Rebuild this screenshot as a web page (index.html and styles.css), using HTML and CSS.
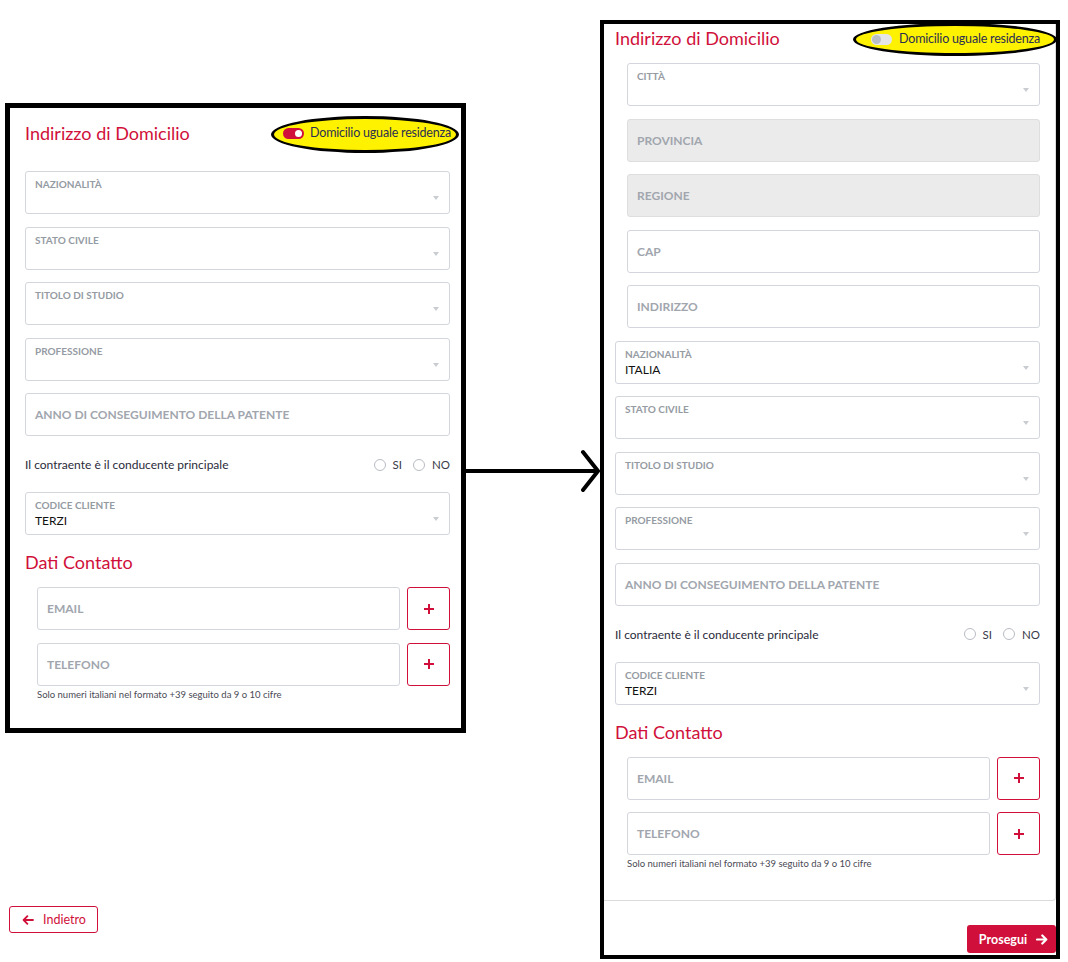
FILE: index.html
```html
<!DOCTYPE html>
<html lang="it">
<head>
<meta charset="utf-8">
<title>Indirizzo di Domicilio</title>
<link rel="stylesheet" href="styles.css">
</head>
<body>
<div class="page">
  <div class="left-col">
    <section class="panel panel--left">
      <div class="head head--left">
        <h2 class="title">Indirizzo di Domicilio</h2>
        <span class="toggle-wrap toggle-wrap--left"><span class="switch switch--on"></span><span class="toggle-text">Domicilio uguale residenza</span></span>
      </div>
      <div class="field field--select"><div class="field-body"><span class="label">NAZIONALITÀ</span><span class="value"></span></div><span class="caret"></span></div>
      <div class="field field--select"><div class="field-body"><span class="label">STATO CIVILE</span><span class="value"></span></div><span class="caret"></span></div>
      <div class="field field--select"><div class="field-body"><span class="label">TITOLO DI STUDIO</span><span class="value"></span></div><span class="caret"></span></div>
      <div class="field field--select"><div class="field-body"><span class="label">PROFESSIONE</span><span class="value"></span></div><span class="caret"></span></div>
      <div class="field"><span class="ph">ANNO DI CONSEGUIMENTO DELLA PATENTE</span></div>
      <div class="radio-row">
        <span>Il contraente è il conducente principale</span>
        <span class="radios"><span class="radio-opt"><i class="radio"></i>SI</span><span class="radio-opt"><i class="radio"></i>NO</span></span>
      </div>
      <div class="field field--select"><div class="field-body"><span class="label">CODICE CLIENTE</span><span class="value">TERZI</span></div><span class="caret"></span></div>
      <h2 class="title title--section">Dati Contatto</h2>
      <div class="contact">
        <div class="field field--grow"><span class="ph">EMAIL</span></div>
        <button class="plus" type="button"><svg width="12" height="12" viewBox="0 0 12 12"><path d="M6 1v10M1 6h10" stroke="#d0103a" stroke-width="2" fill="none"/></svg></button>
      </div>
      <div class="contact">
        <div class="field field--grow"><span class="ph">TELEFONO</span></div>
        <button class="plus" type="button"><svg width="12" height="12" viewBox="0 0 12 12"><path d="M6 1v10M1 6h10" stroke="#d0103a" stroke-width="2" fill="none"/></svg></button>
      </div>
      <p class="help">Solo numeri italiani nel formato +39 seguito da 9 o 10 cifre</p>
    </section>
    <button class="btn-back" type="button"><svg width="12" height="10" viewBox="0 0 12 10"><path d="M11 5H1.8M5.4 1.2L1.6 5l3.8 3.8" stroke="#d0103a" stroke-width="1.8" fill="none" stroke-linecap="round" stroke-linejoin="round"/></svg><span>Indietro</span></button>
  </div>

  <svg class="arrow" width="134" height="50" viewBox="0 0 134 50"><path d="M0 25H132M117 6L132 25L117 44" stroke="#000" stroke-width="4" fill="none" stroke-linecap="round" stroke-linejoin="round"/></svg>

  <section class="panel panel--right">
    <div class="card">
      <div class="head head--right">
        <h2 class="title">Indirizzo di Domicilio</h2>
        <span class="toggle-wrap toggle-wrap--right"><span class="switch switch--off"></span><span class="toggle-text">Domicilio uguale residenza</span></span>
      </div>
      <div class="field field--select field--indent"><div class="field-body"><span class="label">CITTÀ</span><span class="value"></span></div><span class="caret"></span></div>
      <div class="field field--indent field--disabled"><span class="ph">PROVINCIA</span></div>
      <div class="field field--indent field--disabled"><span class="ph">REGIONE</span></div>
      <div class="field field--indent"><span class="ph">CAP</span></div>
      <div class="field field--indent"><span class="ph">INDIRIZZO</span></div>
      <div class="field field--select"><div class="field-body"><span class="label">NAZIONALITÀ</span><span class="value">ITALIA</span></div><span class="caret"></span></div>
      <div class="field field--select"><div class="field-body"><span class="label">STATO CIVILE</span><span class="value"></span></div><span class="caret"></span></div>
      <div class="field field--select"><div class="field-body"><span class="label">TITOLO DI STUDIO</span><span class="value"></span></div><span class="caret"></span></div>
      <div class="field field--select"><div class="field-body"><span class="label">PROFESSIONE</span><span class="value"></span></div><span class="caret"></span></div>
      <div class="field"><span class="ph">ANNO DI CONSEGUIMENTO DELLA PATENTE</span></div>
      <div class="radio-row">
        <span>Il contraente è il conducente principale</span>
        <span class="radios"><span class="radio-opt"><i class="radio"></i>SI</span><span class="radio-opt"><i class="radio"></i>NO</span></span>
      </div>
      <div class="field field--select"><div class="field-body"><span class="label">CODICE CLIENTE</span><span class="value">TERZI</span></div><span class="caret"></span></div>
      <h2 class="title title--section">Dati Contatto</h2>
      <div class="contact">
        <div class="field field--grow"><span class="ph">EMAIL</span></div>
        <button class="plus" type="button"><svg width="12" height="12" viewBox="0 0 12 12"><path d="M6 1v10M1 6h10" stroke="#d0103a" stroke-width="2" fill="none"/></svg></button>
      </div>
      <div class="contact">
        <div class="field field--grow"><span class="ph">TELEFONO</span></div>
        <button class="plus" type="button"><svg width="12" height="12" viewBox="0 0 12 12"><path d="M6 1v10M1 6h10" stroke="#d0103a" stroke-width="2" fill="none"/></svg></button>
      </div>
      <p class="help">Solo numeri italiani nel formato +39 seguito da 9 o 10 cifre</p>
    </div>
    <div class="footer">
      <button class="btn-next" type="button"><span>Prosegui</span><svg width="12" height="11" viewBox="0 0 12 11"><path d="M1 5.5h9M6.3 1.5l4 4-4 4" stroke="#fff" stroke-width="2.2" fill="none" stroke-linecap="round" stroke-linejoin="round"/></svg></button>
    </div>
  </section>
</div>
</body>
</html>
```

FILE: styles.css
```css
* { box-sizing: border-box; }

html, body {
  margin: 0;
  padding: 0;
  background: #fff;
  overflow: hidden;
}

body {
  font-family: Lato, "Open Sans", "Liberation Sans", sans-serif;
  color: #222;
}

.page {
  display: flex;
  align-items: flex-start;
}

.left-col {
  margin-left: 5px;
  margin-top: 103px;
  width: 461px;
  display: flex;
  flex-direction: column;
  align-items: flex-start;
}

.panel {
  background: #fff;
  border: 5px solid #000;
}

.panel--left {
  width: 461px;
  height: 630px;
  padding: 10px 11px 0 15px;
}

.panel--right {
  margin-top: 20px;
  width: 460px;
  height: 939px;
  border-width: 4px;
  display: flex;
  flex-direction: column;
}

.card {
  border-right: 1px solid #dcdcdc;
  border-bottom: 1px solid #dcdcdc;
  border-bottom-right-radius: 4px;
  padding: 0 15px 0 11px;
  height: 877px;
}

.footer {
  display: flex;
  justify-content: flex-end;
  padding: 24px 0 0 0;
}

.arrow {
  display: block;
  margin-top: 446px;
  flex: none;
}

/* header */
.head {
  display: flex;
  align-items: center;
  justify-content: space-between;
}

.head--left {
  height: 30px;
  margin-bottom: 23px;
}

.head--right {
  height: 28px;
  margin-bottom: 11px;
}

.title {
  margin: 0;
  font-size: 18px;
  line-height: 22px;
  font-weight: 400;
  color: #d0103a;
}

.title--section {
  margin: 16px 0 14px;
}

.toggle-wrap {
  position: relative;
  isolation: isolate;
  display: inline-flex;
  align-items: center;
  gap: 6px;
  height: 14px;
}

.toggle-wrap::before {
  content: "";
  position: absolute;
  z-index: -1;
  background: #fff200;
  border: 3.5px solid #000;
  border-radius: 50%;
}

.toggle-wrap--left {
  margin-right: -1px;
}

.toggle-wrap--left::before {
  left: -12px;
  right: -8px;
  top: -10px;
  bottom: -13px;
}

.toggle-wrap--right {
  gap: 7px;
  margin-top: 2px;
}

.toggle-wrap--right::before {
  left: -18px;
  right: -17px;
  top: -9px;
  bottom: -10px;
}

.switch {
  position: relative;
  display: inline-block;
  width: 21px;
  height: 11px;
  border-radius: 6px;
}

.switch::after {
  content: "";
  position: absolute;
  top: 2px;
  width: 7px;
  height: 7px;
  border-radius: 50%;
}

.switch--on { background: #d0103a; }
.switch--on::after { right: 2px; background: #fff; }

.switch--off { background: #e6e6e6; }
.switch--off::after { left: 1px; top: 1px; width: 9px; height: 9px; background: #b9bdc5; }

.toggle-text {
  font-size: 12.5px;
  line-height: 14px;
  color: #2b2f52;
  letter-spacing: -0.2px;
}

/* fields */
.field {
  display: flex;
  align-items: center;
  height: 43px;
  margin-bottom: 12.5px;
  padding: 0 10px 0 9px;
  border: 1px solid #d3d6dc;
  border-radius: 3px;
  background: #fff;
}

.field--indent {
  margin-left: 12px;
}

.field--disabled {
  background: #ebebeb;
  border-color: #dedede;
}

.field--select {
  align-items: flex-start;
  padding-top: 7px;
}

.field-body {
  flex: 1;
  display: flex;
  flex-direction: column;
}

.label {
  font-size: 10px;
  line-height: 11px;
  color: #959ba3;
  font-weight: 700;
}

.value {
  margin-top: 3px;
  font-size: 12px;
  line-height: 14px;
  color: #111;
  min-height: 14px;
}

.caret {
  margin-top: 17px;
  width: 0;
  height: 0;
  border-left: 3.5px solid transparent;
  border-right: 3.5px solid transparent;
  border-top: 4px solid #c9ccd1;
}

.ph {
  font-size: 12px;
  font-weight: 700;
  color: #a1a6ae;
}

/* radio row */
.radio-row {
  display: flex;
  align-items: center;
  justify-content: space-between;
  height: 32px;
  margin-bottom: 11.5px;
  font-size: 12px;
  color: #2a2a3a;
}

.radios {
  display: flex;
  gap: 11px;
}

.radio-opt {
  display: inline-flex;
  align-items: center;
  gap: 7px;
  font-size: 11.5px;
  color: #3a3a4a;
}

.radio {
  display: inline-block;
  width: 12px;
  height: 12px;
  border: 1px solid #b8bcc3;
  border-radius: 50%;
}

/* contact */
.contact {
  display: flex;
  gap: 7px;
  margin-left: 12px;
  margin-bottom: 12.5px;
}

.contact .field {
  margin-bottom: 0;
}

.field--grow {
  flex: 1;
}

.plus {
  width: 43px;
  height: 43px;
  flex: none;
  border: 1px solid #d0103a;
  border-radius: 3px;
  background: #fff;
  display: flex;
  align-items: center;
  justify-content: center;
  padding: 0;
}

.help {
  margin: -9.5px 0 0 12px;
  font-size: 9.5px;
  line-height: 12px;
  color: #4a4a55;
}

/* buttons */
.btn-back {
  margin: 173px 0 0 4px;
  width: 89px;
  height: 27px;
  border: 1px solid #d0103a;
  border-radius: 3px;
  background: #fff;
  color: #d0103a;
  font-family: Lato, "Liberation Sans", sans-serif;
  font-size: 12.5px;
  display: flex;
  align-items: center;
  gap: 9px;
  padding: 0 0 0 12px;
}

.btn-next {
  width: 89px;
  height: 28px;
  border: none;
  border-radius: 3px;
  background: #d0103a;
  color: #fff;
  font-family: Lato, "Liberation Sans", sans-serif;
  font-size: 12.5px;
  font-weight: 700;
  display: flex;
  align-items: center;
  justify-content: center;
  gap: 9px;
  padding: 0 0 0 4px;
}
```
